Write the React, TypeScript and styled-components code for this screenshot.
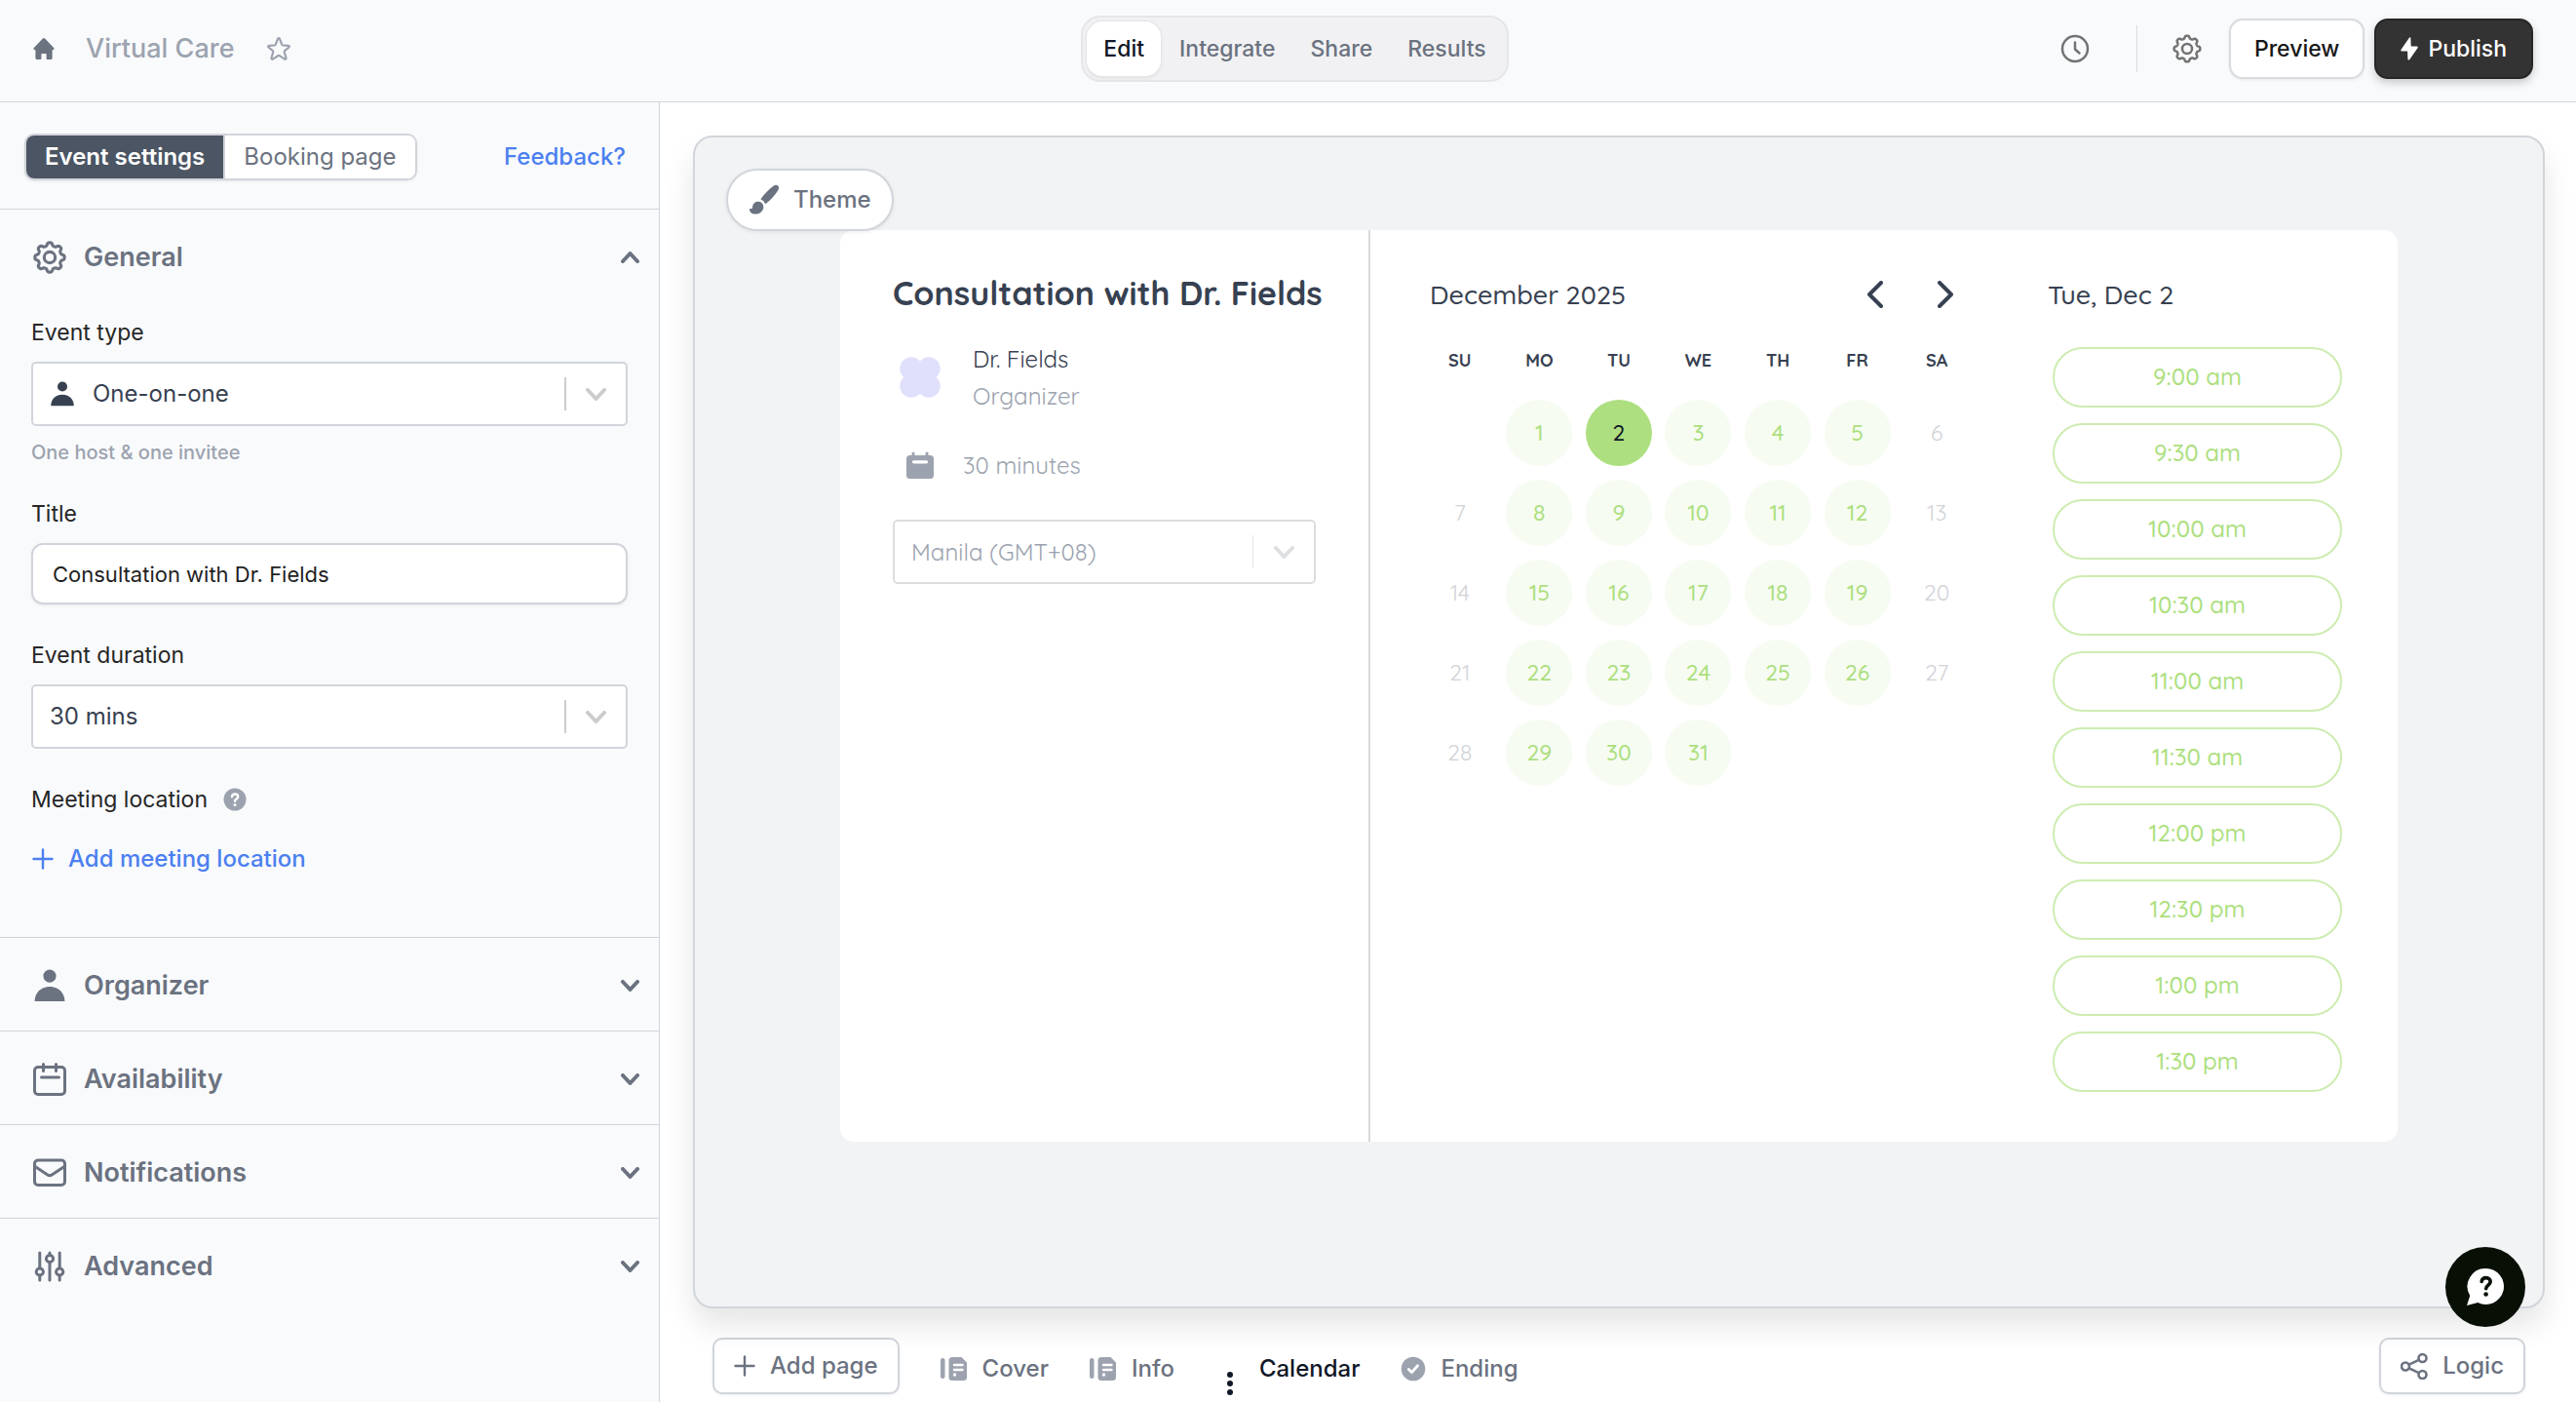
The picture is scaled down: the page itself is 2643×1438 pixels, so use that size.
import React, { useState } from "react";
import styled, { createGlobalStyle, css } from "styled-components";

const ui = `Inter, "Liberation Sans", sans-serif`;
const rounded = `Quicksand, Inter, Lato, sans-serif`;

const Global = createGlobalStyle`
  *, *::before, *::after { box-sizing: border-box; }
  body { margin: 0; background: #fff; font-family: ${ui}; font-size: 24px; line-height: 28px; color: #1f2937; -webkit-font-smoothing: antialiased; }
  button, input, select { font: inherit; color: inherit; }
  button { cursor: pointer; border: 0; background: none; padding: 0; }
  h1, h2, h3, p, ul, fieldset { margin: 0; padding: 0; border: 0; list-style: none; }
  a { text-decoration: none; }
  svg { display: block; flex: none; }
`;

/* ---------- icons ---------- */

const Stroke = styled.svg.attrs({ fill: "none", stroke: "currentColor", strokeLinecap: "round", strokeLinejoin: "round" })``;

const gearPath = (() => {
  const pts: string[] = [];
  for (let i = 0; i < 192; i++) {
    const a = (i / 192) * Math.PI * 2;
    const r = 9.6 + 1.15 * Math.tanh(1.8 * Math.cos(8 * a));
    pts.push(`${(12 + r * Math.sin(a)).toFixed(2)} ${(12 - r * Math.cos(a)).toFixed(2)}`);
  }
  return `M${pts.join("L")}Z`;
})();

const Gear = ({ size, weight = 2 }: { size: number; weight?: number }) => (
  <Stroke width={size} height={size} viewBox="0 0 24 24" strokeWidth={weight}>
    <path d={gearPath} />
    <circle cx="12" cy="12" r="4" />
  </Stroke>
);

const Home = () => (
  <svg width="22" height="24" viewBox="0 0 22 24" fill="currentColor">
    <path d="M9.9 1.5a1.6 1.6 0 0 1 2.2 0l9 9.4c.9 1 .3 2.3-.9 2.3h-.6v8.3c0 .8-.6 1.5-1.4 1.5h-3.6c-.6 0-1-.4-1-1v-4c0-.6-.4-1-1-1h-3.2c-.6 0-1 .4-1 1v4c0 .6-.4 1-1 1H3.8c-.8 0-1.400-.7-1.400-1.500v-8.300h-.6c-1.200 0-1.800-1.300-.9-2.300z" />
  </svg>
);

const Star = () => (
  <Stroke width="26" height="26" viewBox="0 0 26 26" strokeWidth="2.200">
    <path d="M12.100 2.700a1 1 0 0 1 1.800 0l2.300 5.900a1.500 1.500 0 0 0 1.300.9l5.400.3c1 .1 1.300 1.100.6 1.700l-4.200 3.400a1.500 1.500 0 0 0-.5 1.600l1.700 6c.3 1-.7 1.600-1.500 1.100l-5.200-3.400a1.500 1.500 0 0 0-1.600 0L7 23.600c-.8.5-1.800-.1-1.500-1.100l1.700-6a1.500 1.500 0 0 0-.5-1.600l-4.200-3.400c-.7-.6-.4-1.600.6-1.700l5.400-.3a1.500 1.500 0 0 0 1.300-.9z" />
  </Stroke>
);

const Clock = () => (
  <Stroke width="30" height="30" viewBox="0 0 30 30" strokeWidth="2.500">
    <circle cx="15" cy="15" r="13" />
    <path d="M15 8.500v7l4.500 4" />
  </Stroke>
);

const Bolt = () => (
  <svg width="18" height="24" viewBox="0 0 18 24" fill="currentColor">
    <path d="M10.400 1.600c.2-1.300-1-1.700-1.700-.7L.6 12.700c-.7 1-.1 1.800.9 1.800h5.600l.3 7.900c.1 1.300 1.200 1.500 1.900.5l8.200-11.600c.6-1 .1-1.900-.9-1.900h-5.900z" />
  </svg>
);

const Person = ({ size }: { size: number }) => (
  <svg width={size} height={size} viewBox="0 0 32 32" fill="currentColor">
    <circle cx="16" cy="6.700" r="6.200" />
    <path d="M1.500 31C1.500 22.500 8 17 16 17s14.500 5.500 14.500 14z" />
  </svg>
);

const Chevron = ({ dir, w, h, weight }: { dir: "up" | "down" | "left" | "right"; w: number; h: number; weight: number }) => {
  const p = weight / 2;
  const d = {
    up: `M${p} ${h - p}L${w / 2} ${p}L${w - p} ${h - p}`,
    down: `M${p} ${p}L${w / 2} ${h - p}L${w - p} ${p}`,
    left: `M${w - p} ${p}L${p} ${h / 2}L${w - p} ${h - p}`,
    right: `M${p} ${p}L${w - p} ${h / 2}L${p} ${h - p}`,
  }[dir];
  return (
    <Stroke width={w} height={h} viewBox={`0 0 ${w} ${h}`} strokeWidth={weight}>
      <path d={d} />
    </Stroke>
  );
};

const CalendarOutline = () => (
  <Stroke width="34" height="34" viewBox="0 0 34 34" strokeWidth="3">
    <rect x="1.500" y="4.500" width="31" height="28" rx="3.500" />
    <path d="M10.500 1.500v7M23.500 1.500v7M8.500 15h18" />
  </Stroke>
);

const Mail = () => (
  <Stroke width="34" height="34" viewBox="0 0 34 34" strokeWidth="3">
    <rect x="1.500" y="4" width="31" height="25.500" rx="3.500" />
    <path d="M2 10.500L14.800 19a4 4 0 0 0 4.400 0L32 10.500" />
  </Stroke>
);

const Sliders = () => (
  <Stroke width="34" height="34" viewBox="0 0 34 34" strokeWidth="3">
    <path d="M6.800 3v15M6.800 26v5M17 3v2M17 13v18M27.200 3v15M27.200 26v5" />
    <circle cx="6.800" cy="22.500" r="3.600" />
    <circle cx="17" cy="9" r="3.600" />
    <circle cx="27.200" cy="22.500" r="3.600" />
  </Stroke>
);

const Help = () => (
  <svg width="24" height="24" viewBox="0 0 24 24">
    <circle cx="12" cy="12" r="11.500" fill="currentColor" />
    <path d="M9 9.200c.2-3.700 6.200-3.500 6.200 0 0 2.300-3.200 2.300-3.200 4.600" fill="none" stroke="#fff" strokeWidth="2.400" strokeLinecap="round" />
    <circle cx="12" cy="17.600" r="1.500" fill="#fff" />
  </svg>
);

const Plus = () => (
  <Stroke width="22" height="22" viewBox="0 0 22 22" strokeWidth="2.400">
    <path d="M11 1.500v19M1.500 11h19" />
  </Stroke>
);

const Brush = () => (
  <svg width="32" height="32" viewBox="0 0 32 32" fill="currentColor">
    <path d="M30.200 1.500c1.600 1.500.9 3.600-.4 5.400-3.300 4.600-7.200 9.600-12.500 13.300a8 8 0 0 0-4.900-5C16.600 9.800 20.800 5.400 25.500 1.800c1.500-1.100 3.300-1.700 4.700-.3z" />
    <path d="M9.700 17.700c3.300 0 5.600 2.200 5.600 5.500 0 4.600-3.800 7.300-8.200 7.300-3.200 0-5.800-1.600-6.100-4.600-.1-.8.600-1 1.300-.8 1.400.4 1.600-.6 1.800-2.200.4-3.200 2.500-5.200 5.600-5.200z" />
  </svg>
);

const Clover = () => (
  <svg width="42" height="42" viewBox="0 0 42 42" fill="#e0e0fc">
    <circle cx="12" cy="12" r="11.700" />
    <circle cx="30" cy="12" r="11.700" />
    <circle cx="12" cy="30" r="11.700" />
    <circle cx="30" cy="30" r="11.700" />
    <circle cx="21" cy="21" r="14" />
  </svg>
);

const CalendarSolid = () => (
  <svg width="28" height="28" viewBox="0 0 28 28">
    <rect x="0" y="4" width="28" height="24" rx="3.500" fill="currentColor" />
    <path d="M7 2v5M21 2v5" stroke="currentColor" strokeWidth="3" strokeLinecap="round" />
    <path d="M7.500 10.800h13" stroke="#fff" strokeWidth="3.200" strokeLinecap="round" />
  </svg>
);

const PageIcon = () => (
  <svg width="28" height="26" viewBox="0 0 28 26">
    <rect x="0" y="2" width="4.500" height="21" rx="2.250" fill="currentColor" />
    <path d="M12 1h9.500l5.500 5.500V21.500a3.500 3.500 0 0 1-3.500 3.500H12a3.500 3.500 0 0 1-3.500-3.500V4.500A3.500 3.500 0 0 1 12 1z" fill="currentColor" />
    <path d="M14 9h8.500M14 14h8.500" stroke="#fff" strokeWidth="2.400" strokeLinecap="round" />
    <circle cx="14.500" cy="19" r="1.700" fill="#fff" />
  </svg>
);

const Dots = () => (
  <svg width="8" height="26" viewBox="0 0 8 26" fill="currentColor">
    <circle cx="4" cy="4" r="3" />
    <circle cx="4" cy="13" r="3" />
    <circle cx="4" cy="22" r="3" />
  </svg>
);

const CheckBadge = () => (
  <svg width="26" height="26" viewBox="0 0 26 26">
    <circle cx="13" cy="13" r="12.300" fill="currentColor" />
    <path d="M8.300 13.400l3.200 3.200 6-6.800" fill="none" stroke="#fff" strokeWidth="2.800" strokeLinecap="round" strokeLinejoin="round" />
  </svg>
);

const Branch = () => (
  <Stroke width="28" height="28" viewBox="1 0 28 28" strokeWidth="2.600">
    <circle cx="6" cy="14.500" r="4" />
    <circle cx="23.500" cy="6" r="4" />
    <circle cx="23.500" cy="23" r="4" />
    <path d="M9.800 12.600l9.900-4.800M9.800 16.400l9.900 4.800" />
  </Stroke>
);

const ChatIcon = () => (
  <svg width="40" height="40" viewBox="0 0 40 40">
    <path d="M20.500 1a18.500 18.500 0 1 1-8.200 35.100L1 39l3.200-10A18.500 18.500 0 0 1 20.500 1z" fill="#fff" />
    <path d="M16.200 14.500c.3-5.400 9-5 9 0 0 3.600-4.500 3.600-4.500 7.200" fill="none" stroke="#081005" strokeWidth="3.600" strokeLinecap="round" />
    <circle cx="20.600" cy="27.500" r="2.300" fill="#081005" />
  </svg>
);

/* ---------- shell ---------- */

const Shell = styled.div`
  display: grid;
  grid-template-rows: auto 1fr;
  min-height: 100vh;
`;

const Header = styled.header`
  display: grid;
  grid-template-columns: minmax(0, 1fr) auto minmax(0, 1fr);
  align-items: center;
  height: 105px;
  padding: 0 20px 4px 34px;
  background: #f9fafc;
  border-bottom: 1px solid #d1d5db;
`;

const Crumbs = styled.div`
  display: flex;
  align-items: center;
  gap: 32px;
  color: #6b7280;
  a { color: inherit; }
`;

const FormName = styled.h1`
  font-size: 27px;
  line-height: 32px;
  font-weight: 500;
  color: #9ca3af;
`;

const IconButton = styled.button<{ $box?: number; $color?: string }>`
  display: grid;
  place-items: center;
  min-width: ${(p) => p.$box ?? 26}px;
  height: ${(p) => p.$box ?? 26}px;
  color: ${(p) => p.$color ?? "#9ca3af"};
`;

const Nav = styled.nav`
  display: flex;
  gap: 2px;
  padding: 4px;
  border: 2px solid #e5e6e9;
  border-radius: 20px;
  background: #f1f1f3;
`;

const NavTab = styled.button<{ $active?: boolean }>`
  height: 56px;
  padding: 0 17px;
  border-radius: 16px;
  font-size: 23px;
  font-weight: 500;
  color: #6b7280;
  ${(p) =>
    p.$active &&
    css`
      color: #111827;
      background: #fff;
      box-shadow: 0 0 0 1px #e5e5e7, 0 2px 4px rgba(0, 0, 0, 0.08);
    `}
`;

const Actions = styled.div`
  display: flex;
  justify-content: flex-end;
  align-items: center;
  padding-right: 24px;
`;

const Rule = styled.span`
  width: 1px;
  height: 48px;
  margin: 0 36px 0 48px;
  background: #d8dade;
`;

const HeaderButton = styled.button<{ $dark?: boolean }>`
  display: flex;
  align-items: center;
  justify-content: center;
  gap: 10px;
  height: 62px;
  margin-left: ${(p) => (p.$dark ? 10 : 28)}px;
  padding: 0 ${(p) => (p.$dark ? 25 : 24)}px;
  border: 2px solid ${(p) => (p.$dark ? "#262626" : "#d9dbde")};
  border-radius: 14px;
  background: ${(p) => (p.$dark ? "#333" : "#fff")};
  color: ${(p) => (p.$dark ? "#fff" : "#171717")};
  font-size: 23px;
  font-weight: 500;
  box-shadow: ${(p) => (p.$dark ? "0 4px 10px rgba(0,0,0,.2)" : "0 1px 3px rgba(0,0,0,.08)")};
`;

const Body = styled.div`
  display: grid;
  grid-template-columns: 677px minmax(0, 1fr);
`;

/* ---------- sidebar ---------- */

const Sidebar = styled.aside`
  background: #f9fafc;
  border-right: 1px solid #d1d5db;
`;

const ModeBar = styled.div`
  display: flex;
  align-items: center;
  justify-content: space-between;
  height: 110px;
  padding: 2px 34px 0 25px;
  border-bottom: 1px solid #d1d5db;
`;

const Segmented = styled.div`
  display: flex;
  border: 2px solid #d1d5db;
  border-radius: 10px;
  overflow: hidden;
  background: #fff;
  box-shadow: 0 1px 3px rgba(0, 0, 0, 0.08);
`;

const Segment = styled.button<{ $active?: boolean }>`
  height: 44px;
  padding: 0 19px;
  background: ${(p) => (p.$active ? "#4b5563" : "#fff")};
  color: ${(p) => (p.$active ? "#fff" : "#6b7280")};
  font-weight: ${(p) => (p.$active ? 600 : 400)};
  & + & { border-left: 2px solid #d1d5db; }
`;

const Feedback = styled.a`
  font-weight: 500;
  color: #4b80f0;
`;

const Section = styled.section`
  & + & { border-top: 1px solid #d1d5db; }
`;

const SectionToggle = styled.button`
  display: flex;
  align-items: center;
  width: 100%;
  height: 95px;
  padding: 2px 20px 0 34px;
  gap: 18px;
  color: #6b7280;
  font-size: 27px;
  font-weight: 600;
  text-align: left;
  span { flex: 1; }
`;

const Form = styled.form`
  display: flex;
  flex-direction: column;
  gap: 38px;
  padding: 17px 32px 66px;
`;

const Field = styled.div`
  display: flex;
  flex-direction: column;
  gap: 16px;
`;

const Label = styled.label`
  display: flex;
  align-items: center;
  gap: 16px;
  font-size: 23px;
  color: #262626;
`;

const Hint = styled.p`
  font-size: 20px;
  line-height: 22px;
  font-weight: 500;
  color: #9ca3af;
`;

const SelectBox = styled.div<{ $soft?: boolean }>`
  display: flex;
  align-items: center;
  height: 66px;
  padding-left: 17px;
  gap: 18px;
  border: 2px solid ${(p) => (p.$soft ? "#dcdddf" : "#d1d5db")};
  border-radius: 5px;
  background: #fff;
  color: ${(p) => (p.$soft ? "#9ca3af" : "#374151")};
  select {
    flex: 1;
    min-width: 0;
    height: 100%;
    padding: 0;
    border: 0;
    outline: 0;
    appearance: none;
    background: none;
    opacity: 1;
  }
`;

const SelectArrow = styled.span<{ $soft?: boolean }>`
  display: grid;
  place-items: center;
  width: 63px;
  height: 34px;
  border-left: ${(p) => (p.$soft ? "1px solid #e5e6e8" : "2px solid #ccc")};
  color: ${(p) => (p.$soft ? "#dedfe1" : "#ccc")};
`;

const TextInput = styled.input`
  height: 63px;
  width: 100%;
  padding: 0 20px;
  border: 2px solid #d1d5db;
  border-radius: 12px;
  background: #fff;
  font-size: 22px;
  color: #1f1f1f;
  box-shadow: 0 1px 3px rgba(0, 0, 0, 0.07);
`;

const AddLocation = styled.button`
  display: flex;
  align-items: center;
  gap: 15px;
  padding: 17px 1px 0;
  color: #4b80f0;
  font-weight: 500;
`;

const Muted = styled.span`
  color: #9ca3af;
`;

/* ---------- canvas ---------- */

const Main = styled.main`
  display: flex;
  flex-direction: column;
  padding: 34px 32px 0 34px;
`;

const Stage = styled.div`
  position: relative;
  flex: 1;
  padding: 95px 149px 0;
  border: 2px solid #d1d5db;
  border-radius: 20px;
  background: #f2f3f5;
  box-shadow: 0 18px 30px rgba(0, 0, 0, 0.1);
`;

const ThemeButton = styled.button`
  position: absolute;
  top: 32px;
  left: 32px;
  display: flex;
  align-items: center;
  gap: 14px;
  height: 64px;
  padding: 0 21px;
  border: 2px solid #d1d5db;
  border-radius: 32px;
  background: #fff;
  color: #6b7280;
  font-weight: 500;
  box-shadow: 0 1px 4px rgba(0, 0, 0, 0.08);
`;

const Card = styled.article`
  display: grid;
  grid-template-columns: 544px minmax(0, 1fr) 394px;
  min-height: 935px;
  border-radius: 14px;
  background: #fff;
  font-family: ${rounded};
`;

const Details = styled.div`
  padding: 46px 54px;
  border-right: 2px solid #d8d9dc;
`;

const CardTitle = styled.h2`
  font-size: 34px;
  line-height: 38px;
  font-weight: 700;
  white-space: nowrap;
  color: #374151;
`;

const DetailRow = styled.div<{ $gap: number }>`
  display: flex;
  align-items: center;
  gap: ${(p) => p.$gap}px;
  margin: 29px 0 33px;
  line-height: 38px;
  color: #374151;
`;

const DurationRow = styled(DetailRow)`
  margin-bottom: 37px;
`;

const DetailIcon = styled.span`
  display: grid;
  place-items: center;
  width: 56px;
  color: #9ca3af;
`;

const MonthPanel = styled.div`
  padding: 46px 38px 46px 51px;
`;

const PanelHead = styled.div`
  display: flex;
  align-items: center;
  gap: 24px;
  height: 40px;
  padding: 0 8px 0 10px;
  color: #374151;
`;

const PanelTitle = styled.h3`
  flex: 1;
  font-size: 27px;
  line-height: 40px;
  font-weight: 500;
  color: #374151;
`;

const Month = styled.table`
  width: 100%;
  margin-top: 14px;
  border-spacing: 0;
  table-layout: fixed;
  th { height: 67px; padding: 0; font-size: 18px; font-weight: 700; color: #374151; }
  td { height: 82px; padding: 0; text-align: center; }
`;

const Day = styled.button<{ $kind: "open" | "picked" | "off" }>`
  width: 68px;
  height: 68px;
  border-radius: 50%;
  font-size: 23px;
  font-weight: 500;
  ${(p) =>
    ({
      open: css`background: #f6fcf2; color: #addf80;`,
      picked: css`background: #addf80; color: #111827;`,
      off: css`color: #d1d3d7; font-weight: 400;`,
    })[p.$kind]}
`;

const Times = styled.div`
  padding: 46px 52px 50px 35px;
`;

const SlotList = styled.ul`
  display: flex;
  flex-direction: column;
  gap: 16px;
  margin-top: 34px;
  padding: 0 5px;
`;

const Slot = styled.button`
  width: 100%;
  height: 62px;
  padding-bottom: 2px;
  border: 2px solid #cdecb1;
  border-radius: 31px;
  color: #addf80;
  font-size: 24px;
  font-weight: 500;
`;

/* ---------- page bar ---------- */

const PageBar = styled.footer`
  display: flex;
  align-items: flex-start;
  height: 96px;
  padding: 30px 20px 0;
`;

const OutlineButton = styled.button`
  display: flex;
  align-items: center;
  gap: 15px;
  height: 58px;
  padding: 0 20px;
  border: 2px solid #d1d5db;
  border-radius: 10px;
  background: #fff;
  color: #6b7280;
  font-weight: 500;
  box-shadow: 0 1px 3px rgba(0, 0, 0, 0.07);
`;

const PageTabs = styled.nav`
  display: flex;
  flex: 1;
  align-items: center;
  gap: 42px;
  height: 64px;
  padding-left: 42px;
`;

const PageTab = styled.button<{ $active?: boolean }>`
  display: flex;
  align-items: center;
  gap: 15px;
  font-weight: 500;
  color: ${(p) => (p.$active ? "#111827" : "#6b7280")};
  svg { color: ${(p) => (p.$active ? "#111827" : "#9ca3af")}; }
`;

const DotSlot = styled.span`
  display: flex;
  align-items: flex-end;
  justify-content: center;
  width: 30px;
  height: 56px;
`;

const ChatButton = styled.button`
  position: fixed;
  right: 52px;
  bottom: 77px;
  display: grid;
  place-items: center;
  width: 82px;
  height: 82px;
  border-radius: 50%;
  background: #081005;
`;

/* ---------- data ---------- */

const weekdays = ["SU", "MO", "TU", "WE", "TH", "FR", "SA"];
const weeks = [0, 1, 2, 3, 4].map((w) => weekdays.map((_, d) => w * 7 + d));
const slots = ["9:00 am", "9:30 am", "10:00 am", "10:30 am", "11:00 am", "11:30 am", "12:00 pm", "12:30 pm", "1:00 pm", "1:30 pm"];
const sections = [
  { name: "Organizer", icon: <Person size={34} /> },
  { name: "Availability", icon: <CalendarOutline /> },
  { name: "Notifications", icon: <Mail /> },
  { name: "Advanced", icon: <Sliders /> },
];

export default function App() {
  const [title, setTitle] = useState("Consultation with Dr. Fields");
  const [picked, setPicked] = useState(2);

  return (
    <Shell>
      <Global />
      <Header>
        <Crumbs>
          <a href="#home" aria-label="Home"><Home /></a>
          <FormName>Virtual Care</FormName>
          <IconButton aria-label="Favorite"><Star /></IconButton>
        </Crumbs>
        <Nav>
          <NavTab $active>Edit</NavTab>
          <NavTab>Integrate</NavTab>
          <NavTab>Share</NavTab>
          <NavTab>Results</NavTab>
        </Nav>
        <Actions>
          <IconButton $box={30} $color="#737373" aria-label="History"><Clock /></IconButton>
          <Rule />
          <IconButton $box={30} $color="#737373" aria-label="Settings"><Gear size={30} /></IconButton>
          <HeaderButton>Preview</HeaderButton>
          <HeaderButton $dark><Bolt />Publish</HeaderButton>
        </Actions>
      </Header>

      <Body>
        <Sidebar>
          <ModeBar>
            <Segmented>
              <Segment $active>Event settings</Segment>
              <Segment>Booking page</Segment>
            </Segmented>
            <Feedback href="#feedback">Feedback?</Feedback>
          </ModeBar>

          <Section>
            <SectionToggle aria-expanded="true">
              <Gear size={34} weight={2.2} />
              <span>General</span>
              <Chevron dir="up" w={19} h={12} weight={4} />
            </SectionToggle>
            <Form onSubmit={(e) => e.preventDefault()}>
              <Field>
                <Label htmlFor="event-type">Event type</Label>
                <SelectBox>
                  <Person size={26} />
                  <select id="event-type"><option>One-on-one</option></select>
                  <SelectArrow><Chevron dir="down" w={21} h={13} weight={4} /></SelectArrow>
                </SelectBox>
                <Hint>One host &amp; one invitee</Hint>
              </Field>
              <Field>
                <Label htmlFor="title">Title</Label>
                <TextInput id="title" value={title} onChange={(e) => setTitle(e.target.value)} />
              </Field>
              <Field>
                <Label htmlFor="duration">Event duration</Label>
                <SelectBox>
                  <select id="duration"><option>30 mins</option></select>
                  <SelectArrow><Chevron dir="down" w={21} h={13} weight={4} /></SelectArrow>
                </SelectBox>
              </Field>
              <Field>
                <Label as="div">Meeting location<Muted><Help /></Muted></Label>
                <AddLocation type="button"><Plus />Add meeting location</AddLocation>
              </Field>
            </Form>
          </Section>

          {sections.map((s) => (
            <Section key={s.name}>
              <SectionToggle aria-expanded="false">
                {s.icon}
                <span>{s.name}</span>
                <Chevron dir="down" w={19} h={12} weight={4} />
              </SectionToggle>
            </Section>
          ))}
        </Sidebar>

        <Main>
          <Stage>
            <Card>
              <Details>
                <CardTitle>{title}</CardTitle>
                <DetailRow $gap={26}>
                  <DetailIcon><Clover /></DetailIcon>
                  <div>
                    <div>Dr. Fields</div>
                    <Muted>Organizer</Muted>
                  </div>
                </DetailRow>
                <DurationRow $gap={16}>
                  <DetailIcon><CalendarSolid /></DetailIcon>
                  <Muted>30 minutes</Muted>
                </DurationRow>
                <SelectBox $soft>
                  <select aria-label="Time zone"><option>Manila (GMT+08)</option></select>
                  <SelectArrow $soft><Chevron dir="down" w={21} h={13} weight={4} /></SelectArrow>
                </SelectBox>
              </Details>

              <MonthPanel>
                <PanelHead>
                  <PanelTitle>December 2025</PanelTitle>
                  <IconButton $box={48} $color="#374151" aria-label="Previous month"><Chevron dir="left" w={16} h={28} weight={4} /></IconButton>
                  <IconButton $box={48} $color="#374151" aria-label="Next month"><Chevron dir="right" w={16} h={28} weight={4} /></IconButton>
                </PanelHead>
                <Month>
                  <thead>
                    <tr>{weekdays.map((d) => <th key={d} scope="col">{d}</th>)}</tr>
                  </thead>
                  <tbody>
                    {weeks.map((week, i) => (
                      <tr key={i}>
                        {week.map((d, col) => (
                          <td key={col}>
                            {d >= 1 && d <= 31 && (
                              <Day
                                $kind={d === picked ? "picked" : col === 0 || col === 6 ? "off" : "open"}
                                disabled={col === 0 || col === 6}
                                onClick={() => setPicked(d)}
                              >
                                {d}
                              </Day>
                            )}
                          </td>
                        ))}
                      </tr>
                    ))}
                  </tbody>
                </Month>
              </MonthPanel>

              <Times>
                <PanelTitle>Tue, Dec 2</PanelTitle>
                <SlotList>
                  {slots.map((s) => <li key={s}><Slot>{s}</Slot></li>)}
                </SlotList>
              </Times>
            </Card>
            <ThemeButton><Brush />Theme</ThemeButton>
          </Stage>

          <PageBar>
            <OutlineButton><Plus />Add page</OutlineButton>
            <PageTabs>
              <PageTab><PageIcon />Cover</PageTab>
              <PageTab><PageIcon />Info</PageTab>
              <PageTab $active><DotSlot><Dots /></DotSlot>Calendar</PageTab>
              <PageTab><CheckBadge />Ending</PageTab>
            </PageTabs>
            <OutlineButton><Branch />Logic</OutlineButton>
          </PageBar>
        </Main>
      </Body>

      <ChatButton aria-label="Open help chat"><ChatIcon /></ChatButton>
    </Shell>
  );
}
